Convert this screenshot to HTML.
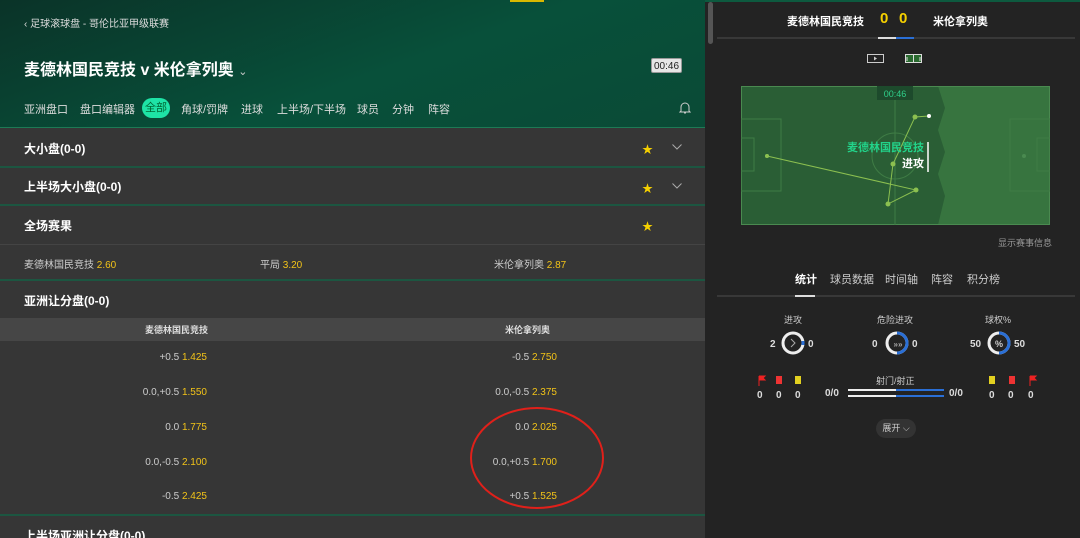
<!DOCTYPE html>
<html><head><meta charset="utf-8"><style>
*{margin:0;padding:0;box-sizing:border-box}
body{width:1080px;height:538px;overflow:hidden;background:#232323;font-family:"Liberation Sans","Noto Sans CJK SC",sans-serif;color:#fff;position:relative}
.a{position:absolute;white-space:nowrap}
#L{position:absolute;left:0;top:0;width:705px;height:538px;background:#363636;overflow:hidden}
#H{position:absolute;left:0;top:0;width:705px;height:128px;background:linear-gradient(160deg,#0a3328 0%,#08503a 55%,#0a4a36 100%);border-bottom:1px solid #1d7a55}
.t{font-size:12px;font-weight:bold;color:#fff}
.g{position:absolute;left:0;width:705px;height:2px;background:#1c5641}
.s{font-size:10px;color:#ccc}
.y{color:#f2c318}
.st{font-size:11px;color:#f5d000}
.o{font-size:10px;color:#ccc;text-align:right}
</style></head><body>
<div id="L">
<div id="H">
 <div class="a" style="left:510px;top:0;width:34px;height:2px;background:#d9b800"></div>
 <div class="a" style="left:24px;top:15px;font-size:10px;color:#ddd">‹ 足球滚球盘 - 哥伦比亚甲级联赛</div>
 <div class="a" style="left:24px;top:56px;font-size:16px;font-weight:bold">麦德林国民竞技 v 米伦拿列奥 <span style="font-size:11px;font-weight:normal;color:#ccc">⌄</span></div>
 <div class="a" style="left:651px;top:58px;width:31px;height:15px;background:#e6e6e6;color:#222;font-size:10px;text-align:center;line-height:15px;border-radius:2px;border:1px solid #999">00:46</div>
 <div class="a" style="left:24px;top:101px;font-size:11px;color:#ddd">亚洲盘口</div>
 <div class="a" style="left:80px;top:101px;font-size:11px;color:#ddd">盘口编辑器</div>
 <div class="a" style="left:142px;top:98px;width:28px;height:20px;border-radius:10px;background:#1ee3a6;color:#063;font-size:11px;text-align:center;line-height:20px">全部</div>
 <div class="a" style="left:181px;top:101px;font-size:11px;color:#ddd">角球/罚牌</div>
 <div class="a" style="left:241px;top:101px;font-size:11px;color:#ddd">进球</div>
 <div class="a" style="left:277px;top:101px;font-size:11px;color:#ddd">上半场/下半场</div>
 <div class="a" style="left:357px;top:101px;font-size:11px;color:#ddd">球员</div>
 <div class="a" style="left:392px;top:101px;font-size:11px;color:#ddd">分钟</div>
 <div class="a" style="left:428px;top:101px;font-size:11px;color:#ddd">阵容</div>
 <svg class="a" style="left:679px;top:101px" width="12" height="14" viewBox="0 0 12 14"><path d="M2 10V6a4 4 0 0 1 8 0v4l1 1H1z M5 12h2" fill="none" stroke="#ccc" stroke-width="1"/></svg>
</div>
<div class="a t" style="left:24px;top:140px">大小盘(0-0)</div>
<div class="a st" style="left:642px;top:141px">★</div>
<svg class="a" style="left:672px;top:144px" width="10" height="6"><path d="M0.5 0.5L5 5L9.5 0.5" fill="none" stroke="#aaa"/></svg>
<div class="g" style="top:166px"></div>
<div class="a t" style="left:24px;top:178px">上半场大小盘(0-0)</div>
<div class="a st" style="left:642px;top:180px">★</div>
<svg class="a" style="left:672px;top:183px" width="10" height="6"><path d="M0.5 0.5L5 5L9.5 0.5" fill="none" stroke="#aaa"/></svg>
<div class="g" style="top:204px"></div>
<div class="a t" style="left:24px;top:217px">全场赛果</div>
<div class="a st" style="left:642px;top:218px">★</div>
<div class="a" style="left:0;top:244px;width:705px;height:1px;background:#444"></div>
<div class="a s" style="left:24px;top:256px">麦德林国民竞技 <span class="y">2.60</span></div>
<div class="a s" style="left:260px;top:256px">平局 <span class="y">3.20</span></div>
<div class="a s" style="left:494px;top:256px">米伦拿列奥 <span class="y">2.87</span></div>
<div class="g" style="top:279px"></div>
<div class="a t" style="left:24px;top:292px">亚洲让分盘(0-0)</div>
<div class="a" style="left:0;top:318px;width:705px;height:23px;background:#464646"></div>
<div class="a" style="left:145px;top:323px;font-size:9px;font-weight:bold;color:#ddd">麦德林国民竞技</div>
<div class="a" style="left:505px;top:323px;font-size:9px;font-weight:bold;color:#ddd">米伦拿列奥</div>
<div class="a o" style="right:498px;top:352px">+0.5 <span class="y">1.425</span></div>
<div class="a o" style="right:148px;top:352px">-0.5 <span class="y">2.750</span></div>
<div class="a o" style="right:498px;top:387px">0.0,+0.5 <span class="y">1.550</span></div>
<div class="a o" style="right:148px;top:387px">0.0,-0.5 <span class="y">2.375</span></div>
<div class="a o" style="right:498px;top:422px">0.0 <span class="y">1.775</span></div>
<div class="a o" style="right:148px;top:422px">0.0 <span class="y">2.025</span></div>
<div class="a o" style="right:498px;top:457px">0.0,-0.5 <span class="y">2.100</span></div>
<div class="a o" style="right:148px;top:457px">0.0,+0.5 <span class="y">1.700</span></div>
<div class="a o" style="right:498px;top:491px">-0.5 <span class="y">2.425</span></div>
<div class="a o" style="right:148px;top:491px">+0.5 <span class="y">1.525</span></div>
<div class="g" style="top:514px"></div>
<div class="a t" style="left:24px;top:527px">上半场亚洲让分盘(0-0)</div>
<svg class="a" style="left:468px;top:406px" width="138" height="104"><ellipse cx="69" cy="52" rx="66" ry="50" fill="none" stroke="#e0201a" stroke-width="2"/></svg>
</div>
<div class="a" style="left:708px;top:2px;width:5px;height:42px;background:#555;border-radius:3px"></div>
<div class="a" style="left:705px;top:0;width:375px;height:2px;background:#0d5a3f"></div>
<!-- right -->
<div class="a" style="left:787px;top:13px;font-size:11px;font-weight:bold">麦德林国民竞技</div>
<div class="a" style="left:880px;top:10px;font-size:15px;font-weight:bold;color:#f5d000">0</div>
<div class="a" style="left:899px;top:10px;font-size:15px;font-weight:bold;color:#f5d000">0</div>
<div class="a" style="left:933px;top:13px;font-size:11px;font-weight:bold">米伦拿列奥</div>
<div class="a" style="left:717px;top:37px;width:358px;height:2px;background:#383838"></div>
<div class="a" style="left:878px;top:37px;width:18px;height:2px;background:#ddd"></div>
<div class="a" style="left:896px;top:37px;width:18px;height:2px;background:#2a6fd6"></div>
<svg class="a" style="left:867px;top:53px" width="56" height="12"><rect x="0.5" y="1.5" width="16" height="8" fill="none" stroke="#ccc"/><path d="M7 3.5l3 2-3 2z" fill="#ccc"/><rect x="38.5" y="1.5" width="16" height="8" fill="#2a6a30" stroke="#ddd"/><path d="M46.5 2v8M40 4v4M53 4v4" stroke="#ddd"/></svg>
<svg class="a" style="left:741px;top:86px" width="309" height="139" viewBox="0 0 309 139">
 <rect width="309" height="139" fill="#37743f"/>
 <path d="M0 0H197L204 22L197 44L204 66L197 88L204 110L197 139H0z" fill="#2a5e35"/>
 <rect x="0.5" y="0.5" width="308" height="138" fill="none" stroke="#4a8a50"/>
 <g fill="none" stroke="#3f7c45"><line x1="154" y1="0" x2="154" y2="139"/><circle cx="154" cy="70" r="23"/><rect x="0" y="33" width="40" height="72"/><rect x="0" y="52" width="13" height="33"/><rect x="269" y="33" width="40" height="72"/><rect x="296" y="52" width="13" height="33"/></g>
 <circle cx="26" cy="70" r="2" fill="#4a8a50"/><circle cx="283" cy="70" r="2" fill="#4a8a50"/>
 <rect x="136" y="0" width="36" height="14" fill="#1d4a2c"/><text x="154" y="11" font-size="9" fill="#2fd08a" text-anchor="middle" font-family="Liberation Sans">00:46</text>
 <path d="M26 70L175 104L147 118L152 78L174 31L188 30" fill="none" stroke="#8cc050" stroke-width="1"/>
 <g fill="#8cc050"><circle cx="175" cy="104" r="2.5"/><circle cx="147" cy="118" r="2.5"/><circle cx="152" cy="78" r="2.5"/><circle cx="174" cy="31" r="2.5"/><circle cx="26" cy="70" r="2"/></g><circle cx="188" cy="30" r="2" fill="#fff"/>
 <text x="183" y="65" font-size="11" font-weight="bold" fill="#22d38a" text-anchor="end" font-family="Liberation Sans,Noto Sans CJK SC">麦德林国民竞技</text>
 <text x="183" y="81" font-size="11" font-weight="bold" fill="#fff" text-anchor="end" font-family="Liberation Sans,Noto Sans CJK SC">进攻</text>
 <line x1="187" y1="56" x2="187" y2="86" stroke="#fff" stroke-width="1.5"/>
</svg>
<div class="a" style="left:998px;top:236px;font-size:9px;color:#999">显示赛事信息</div>
<div class="a" style="left:795px;top:271px;font-size:11px;font-weight:bold">统计</div>
<div class="a" style="left:830px;top:271px;font-size:11px;color:#ccc">球员数据</div>
<div class="a" style="left:885px;top:271px;font-size:11px;color:#ccc">时间轴</div>
<div class="a" style="left:931px;top:271px;font-size:11px;color:#ccc">阵容</div>
<div class="a" style="left:967px;top:271px;font-size:11px;color:#ccc">积分榜</div>
<div class="a" style="left:717px;top:295px;width:358px;height:2px;background:#383838"></div>
<div class="a" style="left:795px;top:295px;width:20px;height:2px;background:#ddd"></div>
<div class="a" style="left:784px;top:313px;font-size:9px;color:#ccc">进攻</div>
<div class="a" style="left:877px;top:313px;font-size:9px;color:#ccc">危险进攻</div>
<div class="a" style="left:985px;top:313px;font-size:9px;color:#ccc">球权%</div>
<svg class="a" style="left:760px;top:328px" width="300" height="30" font-family="Liberation Sans" font-size="10" font-weight="bold" fill="#ddd">
 <text x="10" y="19">2</text><circle cx="33" cy="15" r="10" fill="none" stroke="#eee" stroke-width="3"/><path d="M43 13v4" stroke="#2a6fd6" stroke-width="3"/><path d="M31 11l4 4-4 4" fill="none" stroke="#aaa"/><text x="48" y="19">0</text>
 <text x="112" y="19">0</text><circle cx="137" cy="15" r="10" fill="none" stroke="#eee" stroke-width="3"/><path d="M137 5a10 10 0 0 1 0 20" fill="none" stroke="#2a6fd6" stroke-width="3"/><text x="138" y="19" font-size="8" text-anchor="middle" fill="#aaa">»»</text><text x="152" y="19">0</text>
 <text x="210" y="19">50</text><circle cx="239" cy="15" r="10" fill="none" stroke="#eee" stroke-width="3"/><path d="M239 5a10 10 0 0 1 0 20" fill="none" stroke="#2a6fd6" stroke-width="3"/><text x="239" y="19" font-size="9" text-anchor="middle" fill="#ccc">%</text><text x="254" y="19">50</text>
</svg>
<svg class="a" style="left:755px;top:374px" width="290" height="30" font-family="Liberation Sans" font-size="10" font-weight="bold" fill="#ddd">
 <path d="M4 2v10M4 2h6l-2 2 2 2h-6" fill="#e22" stroke="#e22"/><rect x="21" y="2" width="6" height="8" fill="#e33"/><rect x="40" y="2" width="6" height="8" fill="#e2d020"/>
 <text x="2" y="24">0</text><text x="21" y="24">0</text><text x="40" y="24">0</text>
 <text x="70" y="22">0/0</text>
 <rect x="93" y="15" width="48" height="2" fill="#eee"/><rect x="141" y="15" width="48" height="2" fill="#2a6fd6"/>
 <rect x="93" y="21" width="48" height="2" fill="#eee"/><rect x="141" y="21" width="48" height="2" fill="#2a6fd6"/>
 <text x="194" y="22">0/0</text>
 <rect x="234" y="2" width="6" height="8" fill="#e2d020"/><rect x="254" y="2" width="6" height="8" fill="#e33"/><path d="M275 2v10M275 2h6l-2 2 2 2h-6" fill="#e22" stroke="#e22"/>
 <text x="234" y="24">0</text><text x="253" y="24">0</text><text x="273" y="24">0</text>
</svg>
<div class="a" style="left:876px;top:374px;font-size:9px;color:#ccc">射门/射正</div>
<div class="a" style="left:876px;top:419px;width:40px;height:19px;border-radius:10px;background:#333;font-size:9px;color:#ccc;text-align:center;line-height:19px">展开 ⌵</div>
</body></html>
